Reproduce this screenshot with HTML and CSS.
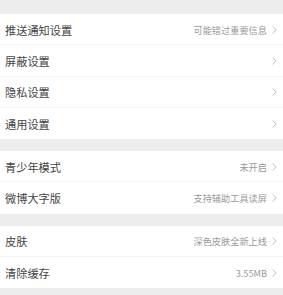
FILE: index.html
```html
<!DOCTYPE html>
<html lang="zh">
<head>
<meta charset="utf-8">
<link rel="stylesheet" href="styles.css">
</head>
<body>
<div class="page">
  <div class="group">
    <div class="row"><span class="label">推送通知设置</span><span class="value">可能错过重要信息</span><svg class="chev" viewBox="0 0 5 8"><path d="M0.6 0.6 L4.2 4 L0.6 7.4"/></svg></div>
    <div class="row"><span class="label">屏蔽设置</span><span class="value"></span><svg class="chev" viewBox="0 0 5 8"><path d="M0.6 0.6 L4.2 4 L0.6 7.4"/></svg></div>
    <div class="row"><span class="label">隐私设置</span><span class="value"></span><svg class="chev" viewBox="0 0 5 8"><path d="M0.6 0.6 L4.2 4 L0.6 7.4"/></svg></div>
    <div class="row"><span class="label">通用设置</span><span class="value"></span><svg class="chev" viewBox="0 0 5 8"><path d="M0.6 0.6 L4.2 4 L0.6 7.4"/></svg></div>
  </div>
  <div class="group">
    <div class="row"><span class="label">青少年模式</span><span class="value">未开启</span><svg class="chev" viewBox="0 0 5 8"><path d="M0.6 0.6 L4.2 4 L0.6 7.4"/></svg></div>
    <div class="row"><span class="label">微博大字版</span><span class="value">支持辅助工具读屏</span><svg class="chev" viewBox="0 0 5 8"><path d="M0.6 0.6 L4.2 4 L0.6 7.4"/></svg></div>
  </div>
  <div class="group">
    <div class="row"><span class="label">皮肤</span><span class="value">深色皮肤全新上线</span><svg class="chev" viewBox="0 0 5 8"><path d="M0.6 0.6 L4.2 4 L0.6 7.4"/></svg></div>
    <div class="row"><span class="label">清除缓存</span><span class="value">3.55MB</span><svg class="chev" viewBox="0 0 5 8"><path d="M0.6 0.6 L4.2 4 L0.6 7.4"/></svg></div>
  </div>
</div>
</body>
</html>
```
FILE: styles.css
```css
html, body {
  margin: 0;
  padding: 0;
  background: #ededed;
}
body {
  font-family: "Noto Sans CJK SC", "Liberation Sans", sans-serif;
  width: 283px;
  height: 295px;
  overflow: hidden;
}
.page {
  display: flex;
  flex-direction: column;
  gap: 12px;
  padding-top: 14px;
}
.group {
  background: #fff;
  display: flex;
  flex-direction: column;
}
.row {
  height: 31.25px;
  box-sizing: border-box;
  display: flex;
  align-items: center;
  padding: 1px 6px 0 5px;
  border-bottom: 1px solid #f4f4f4;
}
.row:last-child {
  border-bottom: none;
}
.label {
  flex: 1;
  font-size: 11.2px;
  color: #444;
}
.value {
  font-size: 9.2px;
  color: #999;
  margin-right: 5px;
}
.chev {
  width: 5px;
  height: 8px;
  fill: none;
  stroke: #bdbdbd;
  stroke-width: 0.9;
}
```
